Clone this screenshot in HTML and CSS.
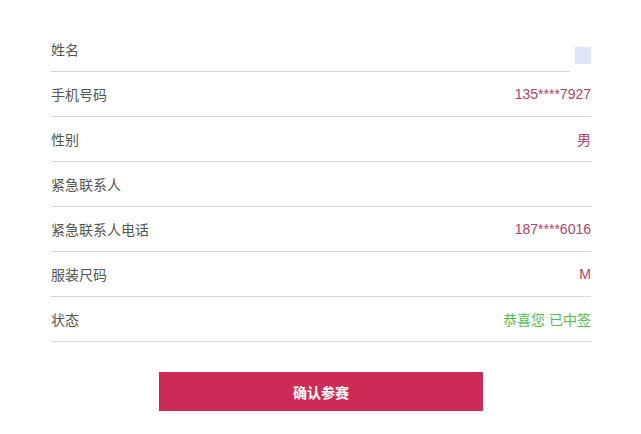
FILE: index.html
```html
<!DOCTYPE html>
<html lang="zh">
<head>
<meta charset="utf-8">
<link rel="stylesheet" href="styles.css">
</head>
<body>
<div class="form">
  <div class="row row-first">
    <div class="field"><span class="label">姓名</span></div>
    <div class="square"></div>
  </div>
  <div class="row"><span class="label">手机号码</span><span class="value">135****7927</span></div>
  <div class="row"><span class="label">性别</span><span class="value">男</span></div>
  <div class="row"><span class="label">紧急联系人</span><span class="value"></span></div>
  <div class="row"><span class="label">紧急联系人电话</span><span class="value">187****6016</span></div>
  <div class="row"><span class="label">服装尺码</span><span class="value">M</span></div>
  <div class="row"><span class="label">状态</span><span class="value green">恭喜您 已中签</span></div>
  <div class="actions"><button class="btn">确认参赛</button></div>
</div>
</body>
</html>
```
FILE: styles.css
```css
html, body {
  margin: 0;
  padding: 0;
  background: #fff;
}
body {
  font-family: "Liberation Sans", Arial, "Noto Sans CJK SC", sans-serif;
  font-size: 14px;
}
.form {
  width: 540px;
  margin-left: 51px;
  padding-top: 27px;
}
.row {
  display: flex;
  justify-content: space-between;
  align-items: center;
  height: 44px;
  border-bottom: 1px solid #d6d6d6;
}
.row-first {
  border-bottom: none;
  height: 45px;
  align-items: flex-start;
}
.field {
  width: 519px;
  height: 44px;
  border-bottom: 1px solid #d6d6d6;
  display: flex;
  align-items: center;
}
.square {
  width: 16px;
  height: 17px;
  margin-top: 20px;
  background: #dde7f9;
}
.label {
  color: #555;
}
.value {
  color: #a9456c;
}
.value.green {
  color: #5ab84a;
}
.actions {
  display: flex;
  justify-content: center;
  margin-top: 30px;
}
.btn {
  width: 324px;
  height: 39px;
  border: none;
  background: #cc2b56;
  color: #fff;
  font-family: "Liberation Sans", Arial, "Noto Sans CJK SC", sans-serif;
  font-size: 14px;
  font-weight: bold;
  padding: 0;
}
```
